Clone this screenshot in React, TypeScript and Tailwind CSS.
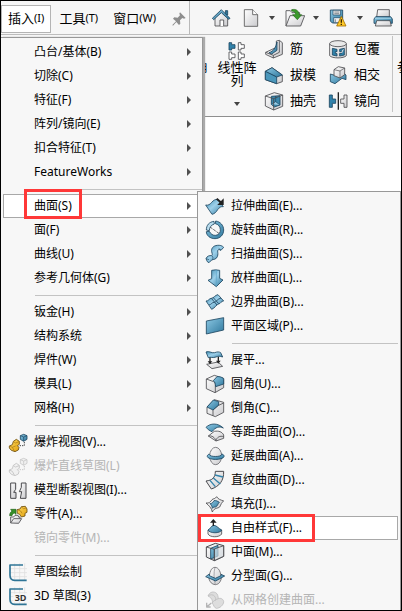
import { ReactNode } from "react";
import clsx from "clsx";

type MenuEntry = {
  label?: string;
  icon?: ReactNode;
  arrow?: boolean;
  disabled?: boolean;
  active?: boolean;
  separator?: boolean;
};

const DARK = "#1d4660";
const LINE = "#4a4a4e";

function Icon({ children, className = "size-5" }: { children: ReactNode; className?: string }) {
  return (
    <svg viewBox="0 0 60 60" className={clsx("shrink-0", className)} fill="none" strokeWidth="2.5" strokeLinejoin="round" aria-hidden="true">
      {children}
    </svg>
  );
}

function Gradients() {
  return (
    <svg className="absolute size-0" aria-hidden="true">
      <defs>
        <linearGradient id="blue" x1="0" y1="0" x2="1" y2="1">
          <stop offset="0" stopColor="#8cc8e4" />
          <stop offset="1" stopColor="#2f789d" />
        </linearGradient>
        <linearGradient id="blueBand" x1="0" y1="0" x2="1" y2="1">
          <stop offset="0" stopColor="#3f8db2" />
          <stop offset="0.45" stopColor="#9dd0ea" />
          <stop offset="1" stopColor="#2f789d" />
        </linearGradient>
        <linearGradient id="grey" x1="0" y1="0" x2="1" y2="1">
          <stop offset="0" stopColor="#ffffff" />
          <stop offset="1" stopColor="#cbcbce" />
        </linearGradient>
        <linearGradient id="yellow" x1="0" y1="0" x2="1" y2="1">
          <stop offset="0" stopColor="#ffd95c" />
          <stop offset="1" stopColor="#e0a010" />
        </linearGradient>
      </defs>
    </svg>
  );
}

const sketchGrid = (
  <>
    <path d="M20 4v52M35 4v52M50 4v52M5 20h52M5 32h52M5 44h52" stroke="#dedee0" strokeWidth="2.5" />
    <path d="M45 9H6V40Q6 55 20 55H56" stroke="#2f7596" strokeWidth="5" />
  </>
);

const icons = {
  explode: (
    <Icon>
      <path d="M4 42l9-4 3-10 9-6 9 6v9l-6 4 5 5-2 8-10 5-11-4-6-7z" fill="url(#yellow)" stroke="#6b4d10" />
      <path d="M4 42l9 4 6 11M16 29l7 4 10-4M13 46l10-4" stroke="#a87612" strokeWidth="2" />
      <path d="M37 11l10-4 10 4v11l-10 6-10-6z" fill="url(#blue)" stroke={DARK} />
      <path d="M37 11l10 4 10-4M47 15v12" stroke={DARK} strokeWidth="2" />
      <path d="M35 41h14V29" stroke="#222" strokeDasharray="4 3" />
    </Icon>
  ),
  explodeLine: (
    <Icon>
      <path d="M4 42l9-4 3-10 9-6 9 6v9l-6 4 5 5-2 8-10 5-11-4-6-7zM4 42l9 4 6 11M16 29l7 4 10-4" fill="#f0f0f0" stroke="#c2c2c2" />
      <path d="M37 11l10-4 10 4v11l-10 6-10-6zM37 11l10 4 10-4M47 15v12" fill="#f0f0f0" stroke="#c8c8c8" />
      <path d="M35 41h14V29" stroke="#bcbcbc" strokeDasharray="4 3" />
    </Icon>
  ),
  breakView: (
    <Icon>
      <path d="M8 9h15v19l-6 9h7v18H8z" fill="url(#grey)" stroke={LINE} strokeWidth="3" />
      <path d="M54 9H40v13l-6 13h7l-4 20h17z" fill="url(#grey)" stroke={LINE} strokeWidth="3" />
    </Icon>
  ),
  part: (
    <Icon>
      <path d="M8 57V39h9l4-5h9l2 5h4v5" fill="url(#grey)" stroke={LINE} />
      <path d="M8 57l9-13h24l-9 14z" fill="url(#grey)" stroke={LINE} />
      <path d="M5 35c0-8 3-11 7-13l-4-6h16v15l-5-4c-5 2-6 5-7 8z" fill="#36902a" stroke="#236418" strokeWidth="2" />
      <path d="M27 17l9-2 4-7 12-1 5 8v10l-6 3v8l-11 3-5-8-7-3z" fill="url(#yellow)" stroke="#6b4d10" />
      <path d="M30 18l8 3 4 7M40 9l7 5 8-2" stroke="#a87612" strokeWidth="2" />
    </Icon>
  ),
  sketch: <Icon>{sketchGrid}</Icon>,
  sketch3d: (
    <Icon>
      {sketchGrid}
      <rect x="16" y="23" width="42" height="26" fill="#f7f7f7" />
      <text x="20" y="45" fontSize="27" fontWeight="700" fill="#333" className="font-['Open_Sans',sans-serif]">3D</text>
    </Icon>
  ),
  extrude: (
    <Icon>
      <path d="M2 27c8 2 13-2 18-8 6-7 11-9 18-9l17 22c-7-1-12 2-17 9-5 8-9 12-17 14z" fill="url(#blueBand)" stroke={DARK} />
      <path d="M35 8l14 12" stroke="#222" strokeWidth="6" />
      <path d="M56 7v20H37z" fill="#222" />
    </Icon>
  ),
  revolve: (
    <Icon>
      <path d="M32 3c14 2 24 13 24 27 0 15-11 26-26 26C15 56 4 46 4 35l9-1c4 8 11 13 19 12 10-1 15-9 14-18-1-9-6-15-15-17z" fill="url(#blue)" stroke={DARK} />
      <path d="M27 4C12 6 4 16 4 30l9 2c0-9 5-17 15-20z" fill="#b9dced" stroke={DARK} />
      <path d="M15 21l28 20" stroke={LINE} strokeWidth="2.5" strokeDasharray="9 3" />
    </Icon>
  ),
  sweep: (
    <Icon>
      <path d="M3 44c3-8 10-10 17-9 3-1 2-5 0-12-2-10 5-18 17-19 7-1 15 1 19 6l-8 9c-4-3-10-3-10 1 0 6 2 11-1 18-3 8-11 8-17 10l-8 8-5-3z" fill="url(#blueBand)" stroke={DARK} />
      <path d="M3 44l9 3M48 19l-7-6M20 35c4 2 5 7 2 12" stroke={DARK} strokeWidth="2" />
    </Icon>
  ),
  loft: (
    <Icon>
      <path d="M20 7q12-3 24 0v24l10 5-20 20L9 37l11-5z" fill="url(#blueBand)" stroke={DARK} />
      <path d="M34 6v49" stroke="#5aa5c8" strokeWidth="2" />
    </Icon>
  ),
  boundary: (
    <Icon>
      <path d="M3 27c8 1 9-8 16-8s11-10 20-11l17 19c-8 0-9 8-15 9s-11 12-21 16z" fill="url(#blueBand)" stroke={DARK} />
      <path d="M12 39c8-2 9-8 15-8s11-11 21-13M19 19l17 20M24 16l17 19" stroke={DARK} />
    </Icon>
  ),
  planar: (
    <Icon>
      <path d="M4 15L56 5v37L4 54z" fill="url(#blue)" stroke={DARK} />
    </Icon>
  ),
  flatten: (
    <Icon>
      <path d="M5 43l34-7 14 13-32 7z" fill="url(#grey)" stroke={LINE} />
      <path d="M15 22v15M40 20v14" stroke="#222" strokeWidth="4" />
      <path d="M8 34h14l-7 9zM33 32h14l-7 9z" fill="#222" />
      <path d="M3 6c10-4 16 4 26 2 8-3 13-3 18 0l6 13c-9-3-13-3-20 0-10 4-16-1-23 2z" fill="url(#blueBand)" stroke={DARK} />
    </Icon>
  ),
  fillet: (
    <Icon>
      <path d="M4 15L28 4l28 9v28L30 56 4 44z" fill="url(#grey)" stroke={LINE} />
      <path d="M4 15l22 8c4 2 5 5 5 9v23" stroke={LINE} />
      <path d="M25 20L36 8c8-1 20 3 20 8v14l-24 8c-1-9-2-15-7-18z" fill="url(#blue)" stroke={DARK} />
    </Icon>
  ),
  chamfer: (
    <Icon>
      <path d="M6 27L28 5l28 8v30L31 56 6 46z" fill="url(#grey)" stroke={LINE} />
      <path d="M24 36v17M24 36l15-13 17-8" stroke={LINE} />
      <path d="M6 27L25 6l16 5v10L24 36z" fill="url(#blue)" stroke={DARK} />
    </Icon>
  ),
  offset: (
    <Icon>
      <path d="M10 42l18-14c13-2 23 1 28 11v10L33 57z" fill="url(#grey)" stroke={LINE} />
      <path d="M10 42c11-2 19 4 23 14 2-10 12-16 23-12" stroke={LINE} />
      <path d="M3 16C16 3 38 2 55 18c-12-6-23-3-34 11-6-2-13-7-18-13z" fill="url(#blue)" stroke={DARK} />
    </Icon>
  ),
  extend: (
    <Icon>
      <ellipse cx="32" cy="30" rx="18" ry="26" fill="url(#grey)" stroke="#68686c" />
      <path d="M13 24c-5 2-7 5-6 8 4 11 46 11 50 0 1-4-2-7-7-8 3 10-40 10-37 0z" fill="url(#blue)" stroke={DARK} />
    </Icon>
  ),
  ruled: (
    <Icon>
      <path d="M31 4h25c1 28-13 45-37 53L3 33c19-2 28-10 28-29z" fill="url(#grey)" stroke={LINE} strokeWidth="3" />
      <path d="M30 15l24 6M25 24l21 18M15 31l16 19" stroke="#3182aa" strokeWidth="4" />
    </Icon>
  ),
  fill: (
    <Icon>
      <path d="M3 27c9 2 14-4 18-10 4-4 9-1 14-9 4 8 13 10 21 13-8 5-7 10-12 18-6 5-15 1-22 15-2-12-11-20-19-27z" fill="url(#grey)" stroke={LINE} />
      <path d="M15 29c6 0 9-4 12-9 6-1 10 1 16 5-5 5-6 12-11 14-5 0-8 1-10 4 0-6-3-10-7-14z" fill="url(#blue)" stroke={DARK} />
    </Icon>
  ),
  freeform: (
    <Icon>
      <path d="M9 36v12c6 11 34 11 41 0V36z" fill="url(#grey)" stroke={LINE} />
      <path d="M9 36c7-2 8-13 18-14 9 1 14 10 23 14-4 11-36 11-41 0z" fill="url(#blue)" stroke={DARK} />
      <path d="M25 10v14" stroke="#222" strokeWidth="4" />
      <path d="M15 14L25 3l10 11z" fill="#222" />
    </Icon>
  ),
  midSurface: (
    <Icon>
      <path d="M4 15L31 4l25 7v32L28 56 4 45z" fill="url(#grey)" stroke={LINE} strokeWidth="3" />
      <path d="M17 19l22-9v32l-22 9z" fill="url(#blue)" stroke={DARK} />
      <path d="M28 21l28-10v32L28 56z" fill="#dfe5e9" fillOpacity="0.65" stroke={LINE} />
      <path d="M4 15l24 7v33" stroke={LINE} />
    </Icon>
  ),
  parting: (
    <Icon>
      <path d="M12 39C13 18 19 4 30 4s18 14 19 34c-4 12-8 17-18 18-11-1-16-8-19-17z" fill="url(#grey)" stroke="#66666a" />
      <path d="M30 4c-4 13-4 38 1 51" stroke="#88888c" strokeWidth="2" />
      <path d="M2 32l11-8v5l18 8 17-8v-4l11 5-27 15z" fill="url(#blue)" stroke={DARK} />
    </Icon>
  ),
  mesh: (
    <Icon>
      <path d="M9 18C13 8 22 3 32 8c7 4 7 12 8 18 7-3 15 1 16 9 0 10-12 20-22 20-7-2-8-10-12-16 2-9-4-17-13-21z" fill="#dddddd" stroke="#bebebf" />
      <path d="M21 39c5-7 12-11 19-13M9 18c6-5 16-5 20 1s4 9 2 13" stroke="#bebebf" />
      <path d="M5 38v13h12M5 51l14-12" stroke="#b4b4b5" strokeWidth="4" />
    </Icon>
  ),
};

const insertMenu: MenuEntry[] = [
  { label: "凸台/基体(B)", arrow: true },
  { label: "切除(C)", arrow: true },
  { label: "特征(F)", arrow: true },
  { label: "阵列/镜向(E)", arrow: true },
  { label: "扣合特征(T)", arrow: true },
  { label: "FeatureWorks", arrow: true },
  { separator: true },
  { label: "曲面(S)", arrow: true, active: true },
  { label: "面(F)", arrow: true },
  { label: "曲线(U)", arrow: true },
  { label: "参考几何体(G)", arrow: true },
  { separator: true },
  { label: "钣金(H)", arrow: true },
  { label: "结构系统", arrow: true },
  { label: "焊件(W)", arrow: true },
  { label: "模具(L)", arrow: true },
  { label: "网格(H)", arrow: true },
  { separator: true },
  { label: "爆炸视图(V)...", icon: icons.explode },
  { label: "爆炸直线草图(L)", icon: icons.explodeLine, disabled: true },
  { label: "模型断裂视图(I)...", icon: icons.breakView },
  { label: "零件(A)...", icon: icons.part },
  { label: "镜向零件(M)...", disabled: true },
  { separator: true },
  { label: "草图绘制", icon: icons.sketch },
  { label: "3D 草图(3)", icon: icons.sketch3d },
];

const surfaceMenu: MenuEntry[] = [
  { label: "拉伸曲面(E)...", icon: icons.extrude },
  { label: "旋转曲面(R)...", icon: icons.revolve },
  { label: "扫描曲面(S)...", icon: icons.sweep },
  { label: "放样曲面(L)...", icon: icons.loft },
  { label: "边界曲面(B)...", icon: icons.boundary },
  { label: "平面区域(P)...", icon: icons.planar },
  { separator: true },
  { label: "展平...", icon: icons.flatten },
  { label: "圆角(U)...", icon: icons.fillet },
  { label: "倒角(C)...", icon: icons.chamfer },
  { label: "等距曲面(O)...", icon: icons.offset },
  { label: "延展曲面(A)...", icon: icons.extend },
  { label: "直纹曲面(D)...", icon: icons.ruled },
  { label: "填充(I)...", icon: icons.fill },
  { label: "自由样式(F)...", icon: icons.freeform, active: true },
  { label: "中面(M)...", icon: icons.midSurface },
  { label: "分型面(G)...", icon: icons.parting },
  { label: "从网格创建曲面...", icon: icons.mesh, disabled: true },
];

function Menu({ entries, highlight }: { entries: MenuEntry[]; highlight: string }) {
  return (
    <ul>
      {entries.map((entry, i) =>
        entry.separator ? (
          <li key={i} className="flex h-2.5 items-center pl-8">
            <hr className="w-full border-[#c3c3c3]" />
          </li>
        ) : (
          <li key={i} className="relative">
            <button
              type="button"
              disabled={entry.disabled}
              className={clsx(
                "flex h-6 w-full items-center gap-1.5 border pl-1 text-left",
                entry.active ? "border-[#a8a8a8] bg-white" : "border-transparent",
                entry.disabled ? "text-[#b5b5b5]" : "text-black"
              )}
            >
              <span className="flex size-5 shrink-0">{entry.icon}</span>
              <span className="flex-1 whitespace-nowrap">{entry.label}</span>
              {entry.arrow && (
                <svg viewBox="0 0 4 8" className="mr-2.5 h-2 w-1" aria-hidden="true">
                  <path d="M0 0l4 4-4 4z" fill="#505050" />
                </svg>
              )}
            </button>
            {entry.active && <span className={clsx("pointer-events-none absolute border-3 border-[#ff3838]", highlight)} />}
          </li>
        )
      )}
    </ul>
  );
}

function MenuBarButton({ name, hotkey, open }: { name: string; hotkey: string; open?: boolean }) {
  return (
    <button
      type="button"
      className={clsx("flex h-7 items-center border px-1.5 text-[13px]", open ? "border-[#b4b4b4] bg-white" : "border-transparent")}
    >
      {name}
      <span className="text-[11px]">({hotkey})</span>
    </button>
  );
}

function Caret() {
  return (
    <svg viewBox="0 0 6 4" className="h-1 w-1.5 shrink-0" aria-hidden="true">
      <path d="M0 0h6L3 4z" fill="#444" />
    </svg>
  );
}

function RibbonButton({ label, children }: { label: string; children: ReactNode }) {
  return (
    <button type="button" className="flex h-[26px] items-center gap-1.5 whitespace-nowrap">
      <Icon className="size-5">{children}</Icon>
      {label}
    </button>
  );
}

function QuickTools() {
  return (
    <div className="flex flex-1 items-center overflow-hidden border-l border-[#b9b9b9] pl-[21px]">
      <button type="button" aria-label="主页" className="mr-2.5">
        <Icon>
          <path d="M12 28v26h38V28L31 12z" fill="url(#grey)" stroke={LINE} />
          <path d="M27 54V36h11v18" fill="#fff" stroke={LINE} />
          <path d="M43 8h7v13h-7z" fill="#2f7596" stroke={DARK} />
          <path d="M4 31L31 5l26 26-4 3-22-20L8 35z" fill="url(#blue)" stroke={DARK} />
        </Icon>
      </button>
      <button type="button" aria-label="新建" className="mr-2">
        <Icon>
          <path d="M10 5h25l15 15v35H10z" fill="url(#grey)" stroke="#555" />
          <path d="M35 5v15h15" fill="#fff" stroke="#555" />
        </Icon>
      </button>
      <Caret />
      <button type="button" aria-label="打开" className="mr-2 ml-2.5">
        <Icon>
          <path d="M3 54V8h13l5 6h23v9" fill="url(#grey)" stroke={LINE} />
          <path d="M3 54l12-31h44L47 54z" fill="url(#grey)" stroke={LINE} />
          <path d="M20 5c13-3 22 3 22 15h8L37 35 23 20h9c0-7-4-10-12-11z" fill="#3c9a2c" stroke="#24691a" strokeWidth="2" />
        </Icon>
      </button>
      <Caret />
      <button type="button" aria-label="保存" className="mr-2 ml-2.5">
        <Icon>
          <path d="M4 6h37v39H10l-6-6z" fill="url(#blue)" stroke={DARK} />
          <path d="M12 7h22v14H12zM14 29h20v15H14z" fill="#eee" stroke={DARK} strokeWidth="2" />
          <path d="M16 12h14M16 17h14M19 34v9" stroke="#4d5960" strokeWidth="2" />
          <path d="M37 25L51 54H23z" fill="#ffc928" stroke="#a27000" />
          <path d="M37 34v10M37 47v4" stroke="#3a2600" strokeWidth="4" />
        </Icon>
      </button>
      <Caret />
      <button type="button" aria-label="打印" className="ml-2.5">
        <Icon>
          <path d="M14 5h35v22H11z" fill="url(#grey)" stroke={LINE} />
          <path d="M8 26h45l5 7v13H3V33z" fill="url(#blue)" stroke={DARK} />
          <path d="M11 38h40l4 16H7z" fill="url(#grey)" stroke={LINE} />
          <path d="M6 31h48" stroke="#a9d5e9" />
        </Icon>
      </button>
    </div>
  );
}

function Ribbon() {
  return (
    <div className="flex h-[82px] overflow-hidden border-b border-[#8f8f8f] bg-[#f6f6f6] pt-px pl-[194px] text-[13px]">
      <div className="flex w-[13px] shrink-0 justify-end overflow-hidden pt-[22px]">
        <span>角</span>
      </div>
      <button type="button" className="ml-1.5 flex w-[46px] shrink-0 flex-col items-center pt-[5px]">
        <Icon>
          <path d="M6 5h8v6h10v11H14v5H6z" fill="#3182aa" stroke={DARK} />
          <path d="M34 5h8v6h10v11H42v5h-8zM6 33h8v6h10v11H14v5H6zM34 33h8v6h10v11H42v5h-8z" fill="#fff" stroke={LINE} />
        </Icon>
        <span className="w-10 text-center leading-[13px] break-all">线性阵列</span>
        <span className="mt-[15px] flex">
          <Caret />
        </span>
      </button>
      <div className="ml-1 flex w-14 shrink-0 flex-col">
        <RibbonButton label="筋">
          <path d="M5 40L37 25V6l9-2 9 7v35L28 57 5 46z" fill="url(#grey)" stroke={LINE} />
          <path d="M15 41c14-4 20-15 24-32v25L23 45z" fill="url(#blue)" stroke={DARK} />
          <path d="M5 40l23 9 18-9V5M28 49v8" stroke={LINE} />
        </RibbonButton>
        <RibbonButton label="拔模">
          <path d="M4 19L24 8l31 22v20L38 56 4 44z" fill="url(#grey)" stroke={LINE} />
          <path d="M4 19L24 8l31 22-17 6z" fill="url(#blue)" stroke={DARK} />
          <path d="M4 19l34 17v20L4 44z" fill="#4a97bb" stroke={DARK} />
        </RibbonButton>
        <RibbonButton label="抽壳">
          <path d="M4 15L31 5l25 7v34L29 57 4 45z" fill="url(#grey)" stroke={LINE} />
          <path d="M22 16l26-2v28L31 48l-9-8z" fill="#3b88ad" stroke={DARK} />
          <path d="M22 40l13-8 13 10M35 32V15" fill="#9bcde5" stroke={DARK} strokeWidth="2" />
          <path d="M4 15l25 8v34M29 23l27-11" stroke={LINE} />
        </RibbonButton>
      </div>
      <div className="ml-2 flex w-14 shrink-0 flex-col">
        <RibbonButton label="包覆">
          <path d="M5 14v36c7 9 43 9 50 0V14" fill="url(#grey)" stroke={LINE} />
          <ellipse cx="30" cy="14" rx="25" ry="9" fill="#e9e9e9" stroke={LINE} />
          <path d="M13 28l14 3v7h-5v5l5 1v7l-14-3zM49 28l-14 3v7l6-1v-2M49 28v20l-14 3v-8h7" fill="#3182aa" stroke={DARK} />
        </RibbonButton>
        <RibbonButton label="相交">
          <path d="M7 27l13 4 28-6 6 5v14L42 40 21 56 7 50z" fill="url(#blue)" stroke={DARK} />
          <path d="M18 14L31 5l19 4v20L36 39l-18-7z" fill="url(#grey)" stroke={LINE} />
          <path d="M18 14l18 4v21M36 18l14-9" stroke={LINE} strokeWidth="2" />
        </RibbonButton>
        <RibbonButton label="镜向">
          <path d="M4 12h9v12h10v13H13v12H4z" fill="#3182aa" stroke={DARK} />
          <path d="M31 4v52" stroke="#222" strokeWidth="4" />
          <path d="M57 12h-9v12H38v13h10v12h9z" fill="url(#grey)" stroke={LINE} />
        </RibbonButton>
      </div>
      <div className="mb-1 ml-2 border-l border-[#c3c3c3] pt-[22px] pl-1">参</div>
    </div>
  );
}

export default function App() {
  return (
    <div className="relative h-screen overflow-hidden border border-black bg-white font-['Noto_Sans','Noto_Sans_CJK_SC',sans-serif] text-xs text-black">
      <Gradients />
      <header>
        <div className="flex h-[34px] border-b border-[#bdbdbd] bg-[#f6f6f6]">
          <nav className="flex w-[188px] shrink-0 items-center gap-px pt-0.5">
            <MenuBarButton name="插入" hotkey="I" open />
            <MenuBarButton name="工具" hotkey="T" />
            <MenuBarButton name="窗口" hotkey="W" />
            <svg viewBox="0 0 42 42" className="ml-2 size-3.5" aria-label="固定">
              <path d="M24 1l17 17-5 2-5-2-7 7 1 10-4 4-8-9L3 41l-2-2 11-11-9-8 4-4 10 1 7-7-2-5z" fill="#8d8d8d" />
            </svg>
          </nav>
          <QuickTools />
        </div>
        <Ribbon />
      </header>

      <div className="absolute top-9 left-0 w-[202px] border-t border-r border-[#989898] bg-[#f7f7f7] pt-0.5 pb-3 pl-0.5 shadow-[2px_0_1px_#aaaaaa]">
        <Menu entries={insertMenu} highlight="-top-[5px] left-[21px] h-[30px] w-[58px]" />
      </div>

      <div className="absolute top-[190px] right-0 left-[196px] border border-[#989898] bg-[#f7f7f7] px-0.5 pt-0.5">
        <Menu entries={surfaceMenu} highlight="-top-0.5 -left-0.5 h-7 w-[117px]" />
      </div>
    </div>
  );
}
